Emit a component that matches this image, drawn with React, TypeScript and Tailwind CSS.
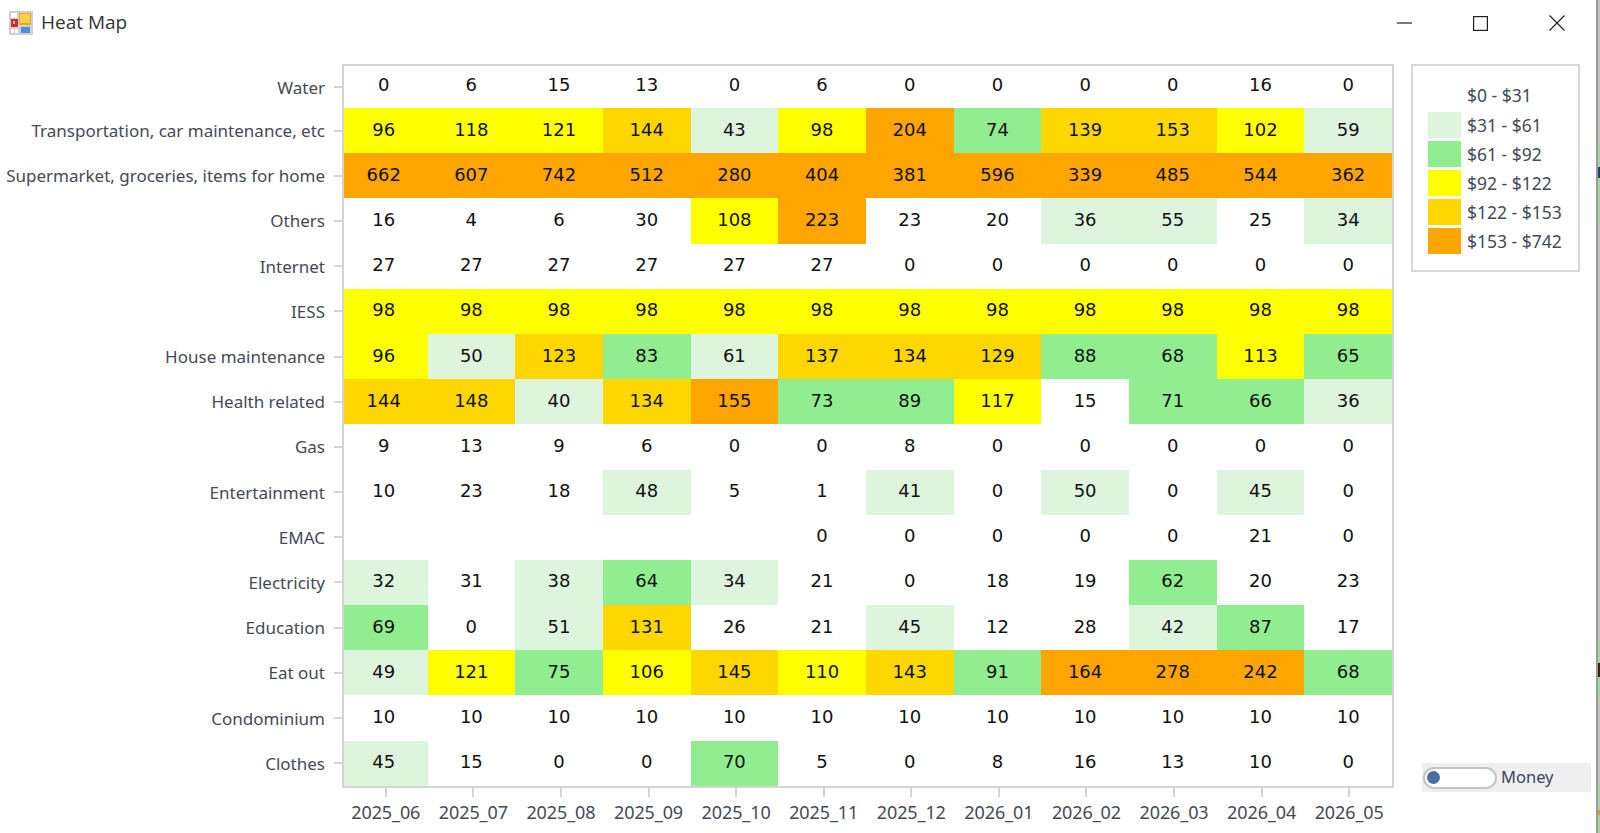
const rows: [string, (number | null)[]][] = [
  ["Water", [0, 6, 15, 13, 0, 6, 0, 0, 0, 0, 16, 0]],
  ["Transportation, car maintenance, etc", [96, 118, 121, 144, 43, 98, 204, 74, 139, 153, 102, 59]],
  ["Supermarket, groceries, items for home", [662, 607, 742, 512, 280, 404, 381, 596, 339, 485, 544, 362]],
  ["Others", [16, 4, 6, 30, 108, 223, 23, 20, 36, 55, 25, 34]],
  ["Internet", [27, 27, 27, 27, 27, 27, 0, 0, 0, 0, 0, 0]],
  ["IESS", [98, 98, 98, 98, 98, 98, 98, 98, 98, 98, 98, 98]],
  ["House maintenance", [96, 50, 123, 83, 61, 137, 134, 129, 88, 68, 113, 65]],
  ["Health related", [144, 148, 40, 134, 155, 73, 89, 117, 15, 71, 66, 36]],
  ["Gas", [9, 13, 9, 6, 0, 0, 8, 0, 0, 0, 0, 0]],
  ["Entertainment", [10, 23, 18, 48, 5, 1, 41, 0, 50, 0, 45, 0]],
  ["EMAC", [null, null, null, null, null, 0, 0, 0, 0, 0, 21, 0]],
  ["Electricity", [32, 31, 38, 64, 34, 21, 0, 18, 19, 62, 20, 23]],
  ["Education", [69, 0, 51, 131, 26, 21, 45, 12, 28, 42, 87, 17]],
  ["Eat out", [49, 121, 75, 106, 145, 110, 143, 91, 164, 278, 242, 68]],
  ["Condominium", [10, 10, 10, 10, 10, 10, 10, 10, 10, 10, 10, 10]],
  ["Clothes", [45, 15, 0, 0, 70, 5, 0, 8, 16, 13, 10, 0]],
];

const months = ["2025_06", "2025_07", "2025_08", "2025_09", "2025_10", "2025_11", "2025_12", "2026_01", "2026_02", "2026_03", "2026_04", "2026_05"];

const legend: [string, string][] = [
  ["$0 - $31", "bg-white"],
  ["$31 - $61", "bg-[#ddf4dd]"],
  ["$61 - $92", "bg-[#90ee90]"],
  ["$92 - $122", "bg-[#ffff00]"],
  ["$122 - $153", "bg-[#ffd700]"],
  ["$153 - $742", "bg-[#ffa500]"],
];

function cellColor(v: number | null) {
  if (v === null || v <= 31) return "bg-white";
  if (v <= 61) return "bg-[#ddf4dd]";
  if (v <= 92) return "bg-[#90ee90]";
  if (v <= 122) return "bg-[#ffff00]";
  if (v <= 153) return "bg-[#ffd700]";
  return "bg-[#ffa500]";
}

function AppIcon() {
  return (
    <svg width="24" height="24" viewBox="0 0 24 24">
      <rect x="0" y="0" width="24" height="24" fill="#d0d0d0" />
      <rect x="2" y="2" width="6" height="5" fill="#fff" />
      <rect x="2" y="8" width="7" height="8" fill="#c8302f" />
      <rect x="4" y="10" width="2" height="3" fill="#f3b0a8" />
      <rect x="2" y="18" width="3" height="4" fill="#fff" />
      <rect x="6" y="18" width="3" height="4" fill="#fff" />
      <rect x="10" y="2" width="12" height="12" fill="#e8a91e" />
      <rect x="11" y="3" width="10" height="9" fill="#f9d24a" />
      <rect x="12" y="16" width="9" height="6" fill="#4b8fe2" />
    </svg>
  );
}

export default function App() {
  return (
    <div className="relative h-[833px] w-[1600px] overflow-hidden bg-white font-['Noto_Sans',sans-serif] text-[#454a56]">
      <div className="flex h-[45px] items-center pl-[9px]">
        <AppIcon />
        <span className="ml-2 font-['Open_Sans',sans-serif] text-[19px] text-[#333]">Heat Map</span>
        <div className="ml-auto flex items-center gap-[61px] pr-[35px] pt-px">
          <svg width="15" height="16" viewBox="0 0 15 16"><path d="M0 8H15" stroke="#222" strokeWidth="1.2" /></svg>
          <svg width="15" height="15" viewBox="0 0 15 15"><rect x="0.6" y="0.6" width="13.8" height="13.8" fill="none" stroke="#222" strokeWidth="1.2" /></svg>
          <svg width="16" height="16" viewBox="0 0 16 16"><path d="M0.5 0.5L15.5 15.5M15.5 0.5L0.5 15.5" stroke="#222" strokeWidth="1.2" /></svg>
        </div>
      </div>

      <div className="flex items-start pt-[19px]">
        <div className="flex w-[342px] flex-col pt-[2px]">
          {rows.map(([label], r) => (
            <div key={label} className={`flex ${r === 0 ? "h-[42px]" : "h-[45.2px]"} items-center justify-end`}>
              <span className="whitespace-nowrap pr-[9px] text-[17px] leading-none">{label}</span>
              <span className="h-[2px] w-[8px] bg-[#d4d4d4]" />
            </div>
          ))}
        </div>

        <div className="flex w-[1052px] flex-col">
          <div className="border-2 border-[#d4d4d4]">
            {rows.map(([label, values], r) => (
              <div key={label} className={`grid ${r === 0 ? "h-[42px]" : "h-[45.2px]"} grid-cols-[83.5px_repeat(11,1fr)]`}>
                {values.map((v, i) => (
                  <div key={i} className={`${cellColor(v)} ${i === 0 ? "pr-1" : ""} ${r === 0 ? "pb-[5px]" : "pb-[3px]"} flex items-center justify-center font-['DejaVu_Sans',sans-serif] text-[18px] text-[#111]`}>
                    {v}
                  </div>
                ))}
              </div>
            ))}
          </div>
          <div className="grid w-[1051px] grid-cols-12">
            {months.map((m) => (
              <div key={m} className="flex flex-col items-center">
                <span className="h-[9px] w-[2px] bg-[#d4d4d4]" />
                <span className="mt-[3px] text-[18px] leading-[24px] tracking-[-0.1px]">{m}</span>
              </div>
            ))}
          </div>
        </div>

        <div className="ml-[17px] flex h-[728px] w-[186px] flex-col justify-between">
          <div className="h-[208px] w-[169px] border-2 border-[#d8d8d8] pl-[15px] pt-[15px]">
            {legend.map(([text, color]) => (
              <div key={text} className="flex h-[29.1px] items-center">
                <span className={`${color} h-[26px] w-[33px]`} />
                <span className="ml-[6px] text-[17.5px]">{text}</span>
              </div>
            ))}
          </div>
          <div className="ml-[11px] flex h-[29px] w-[169px] items-center bg-[#efefef] pl-[1px]">
            <span className="flex h-[22px] w-[74px] items-center rounded-full border-2 border-[#c4c4c4] bg-white pl-[2px]">
              <span className="h-[13px] w-[13px] rounded-full bg-[#4a6fa5]" />
            </span>
            <span className="ml-1 text-[16.5px] text-[#3c4660]">Money</span>
          </div>
        </div>
      </div>

      <div className="absolute right-0 top-0 flex h-full w-[4px] flex-col border-l-2 border-[#9a9a9a] bg-[#c4c4bc]">
        <div className="mt-[140px] h-[27px] bg-[#a8d3a4]" />
        <div className="h-[11px] bg-[#0f4a68]" />
        <div className="h-[47px] bg-[#a8d3a4]" />
        <div className="mt-[415px] h-[23px] bg-[#a8d3a4]" />
        <div className="h-[14px] bg-[#3a2410]" />
        <div className="h-[21px] bg-[#a8d3a4]" />
        <div className="mt-[85px] h-[27px] bg-[#a8d3a4]" />
        <div className="h-[5px] bg-[#d0a040]" />
        <div className="flex-1 bg-[#a8d3a4]" />
      </div>
    </div>
  );
}
